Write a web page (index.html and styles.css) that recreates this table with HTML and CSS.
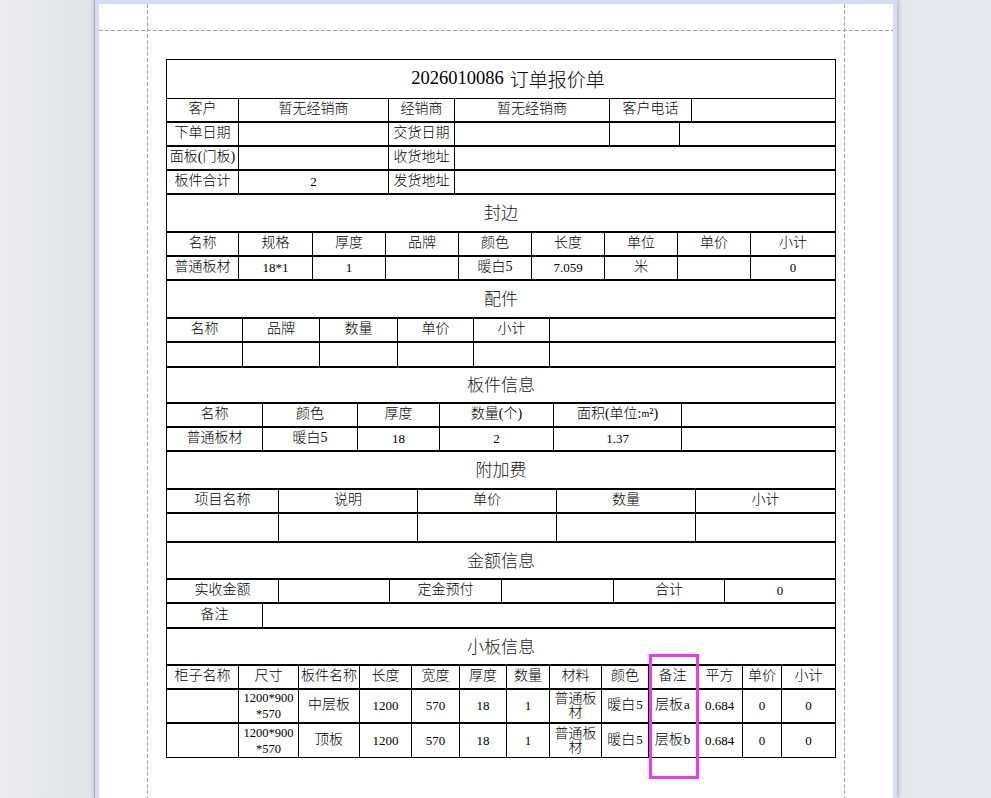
FILE: index.html
```html
<!DOCTYPE html>
<html lang="zh-CN">
<head>
<meta charset="utf-8">
<title>订单报价单</title>
<link rel="stylesheet" href="styles.css">
</head>
<body>
<div class="viewer">
  <div class="frame">
    <div class="page">
      <div class="guide-h"></div>
      <div class="guide-v gl"></div>
      <div class="guide-v gr"></div>

      <div class="tbl">
        <div class="row title h39"><span class="tn">2026010086</span><span class="tc">订单报价单</span></div>

        <div class="row g-info1 h24">
          <div class="c">客户</div><div class="c">暂无经销商</div><div class="c">经销商</div><div class="c">暂无经销商</div><div class="c">客户电话</div><div class="c"></div>
        </div>
        <div class="row g-info2 h24">
          <div class="c">下单日期</div><div class="c"></div><div class="c">交货日期</div><div class="c"></div><div class="c"></div><div class="c"></div>
        </div>
        <div class="row g-info3 h24">
          <div class="c">面板(门板)</div><div class="c"></div><div class="c">收货地址</div><div class="c"></div>
        </div>
        <div class="row g-info3 h24">
          <div class="c">板件合计</div><div class="c num">2</div><div class="c">发货地址</div><div class="c"></div>
        </div>

        <div class="row sec h38">封边</div>
        <div class="row g-edge h24">
          <div class="c">名称</div><div class="c">规格</div><div class="c">厚度</div><div class="c">品牌</div><div class="c">颜色</div><div class="c">长度</div><div class="c">单位</div><div class="c">单价</div><div class="c">小计</div>
        </div>
        <div class="row g-edge h24">
          <div class="c">普通板材</div><div class="c num">18*1</div><div class="c num">1</div><div class="c"></div><div class="c">暖白5</div><div class="c num">7.059</div><div class="c">米</div><div class="c"></div><div class="c num">0</div>
        </div>

        <div class="row sec h38">配件</div>
        <div class="row g-acc h24">
          <div class="c">名称</div><div class="c">品牌</div><div class="c">数量</div><div class="c">单价</div><div class="c">小计</div><div class="c"></div>
        </div>
        <div class="row g-acc h25">
          <div class="c"></div><div class="c"></div><div class="c"></div><div class="c"></div><div class="c"></div><div class="c"></div>
        </div>

        <div class="row sec h36">板件信息</div>
        <div class="row g-panel h24">
          <div class="c">名称</div><div class="c">颜色</div><div class="c">厚度</div><div class="c">数量(个)</div><div class="c">面积(单位:<span class="sm">m</span>²)</div><div class="c"></div>
        </div>
        <div class="row g-panel h24">
          <div class="c">普通板材</div><div class="c">暖白5</div><div class="c num">18</div><div class="c num">2</div><div class="c num">1.37</div><div class="c"></div>
        </div>

        <div class="row sec h38">附加费</div>
        <div class="row g-extra h24">
          <div class="c">项目名称</div><div class="c">说明</div><div class="c">单价</div><div class="c">数量</div><div class="c">小计</div>
        </div>
        <div class="row g-extra h29">
          <div class="c"></div><div class="c"></div><div class="c"></div><div class="c"></div><div class="c"></div>
        </div>

        <div class="row sec h37">金额信息</div>
        <div class="row g-money h24">
          <div class="c">实收金额</div><div class="c"></div><div class="c">定金预付</div><div class="c"></div><div class="c">合计</div><div class="c num">0</div>
        </div>
        <div class="row g-note h25">
          <div class="c">备注</div><div class="c"></div>
        </div>

        <div class="row sec h37">小板信息</div>
        <div class="row g-small h24">
          <div class="c">柜子名称</div><div class="c">尺寸</div><div class="c">板件名称</div><div class="c">长度</div><div class="c">宽度</div><div class="c">厚度</div><div class="c">数量</div><div class="c">材料</div><div class="c">颜色</div><div class="c">备注</div><div class="c">平方</div><div class="c">单价</div><div class="c">小计</div>
        </div>
        <div class="row g-small h34">
          <div class="c"></div><div class="c num wrap">1200*900<br>*570</div><div class="c">中层板</div><div class="c num">1200</div><div class="c num">570</div><div class="c num">18</div><div class="c num">1</div><div class="c wrap">普通板<br>材</div><div class="c">暖白<span class="n5">5</span></div><div class="c">层板<span class="n5">a</span></div><div class="c num">0.684</div><div class="c num">0</div><div class="c num">0</div>
        </div>
        <div class="row g-small h33 last">
          <div class="c"></div><div class="c num wrap">1200*900<br>*570</div><div class="c">顶板</div><div class="c num">1200</div><div class="c num">570</div><div class="c num">18</div><div class="c num">1</div><div class="c wrap">普通板<br>材</div><div class="c">暖白<span class="n5">5</span></div><div class="c">层板<span class="n5">b</span></div><div class="c num">0.684</div><div class="c num">0</div><div class="c num">0</div>
        </div>

        <div class="mark"></div>
      </div>
    </div>
  </div>
</div>
</body>
</html>
```

FILE: styles.css
```css
html, body {
  margin: 0;
  padding: 0;
}
body {
  background: #e8e9ee;
  height: 798px;
  overflow: hidden;
  font-family: "Liberation Serif", "Noto Sans CJK SC", serif;
  color: #000;
}
.viewer {
  padding-left: 94px;
  height: 798px;
  background: linear-gradient(to right, #ececf0 0, #e3e4e9 90px, #e8e9ee 100%);
}
.frame {
  width: 803px;
  height: 798px;
  box-sizing: border-box;
  background: #d5dcf3;
  border-left: 1px solid #a9aab1;
  padding: 4px 4px 0 4px;
  box-shadow: 1px 0 5px rgba(0, 0, 0, 0.28);
}
.page {
  position: relative;
  background: #fff;
  height: 800px;
  box-sizing: border-box;
  padding: 55px 0 0 67px;
}
.guide-h {
  position: absolute;
  left: 0;
  right: 0;
  top: 26px;
  height: 1px;
  background: repeating-linear-gradient(to right, #a3a3a3 0 4px, transparent 4px 6px);
}
.guide-v {
  position: absolute;
  top: 0;
  bottom: 0;
  width: 1px;
  background: repeating-linear-gradient(to bottom, #a3a3a3 0 4px, transparent 4px 6px);
}
.gl { left: 48px; }
.gr { left: 745px; }

.tbl {
  position: relative;
  width: 670px;
  box-sizing: border-box;
  border: 1px solid #000;
}
.row {
  box-sizing: border-box;
  border-bottom: 2px solid #000;
  display: grid;
}
.row.last { border-bottom: 0; }
.title {
  border-bottom-width: 1px;
  display: flex;
  align-items: center;
  justify-content: center;
  padding-left: 14px;
  padding-bottom: 1px;
}
.tn {
  font-family: "Liberation Serif", serif;
  font-size: 18.5px;
}
.tc {
  font-family: "Noto Sans CJK SC", sans-serif;
  font-size: 19px;
  font-weight: 300;
  margin-left: 6px;
}
.sec {
  display: flex;
  align-items: center;
  justify-content: center;
  font-family: "Noto Sans CJK SC", sans-serif;
  font-size: 17px;
  font-weight: 300;
  color: #1a1a1a;
  padding-bottom: 3px;
}
.h24 { height: 24px; }
.h25 { height: 25px; }
.h29 { height: 29px; }
.h33 { height: 33px; }
.h34 { height: 34px; }
.h36 { height: 36px; }
.h37 { height: 37px; }
.h38 { height: 38px; }
.h39 { height: 39px; }

.g-info1 { grid-template-columns: 71px 150px 66px 155px 82px 144px; }
.g-info2 { grid-template-columns: 71px 150px 66px 155px 70px 156px; }
.g-info3 { grid-template-columns: 71px 150px 66px 381px; }
.g-edge { grid-template-columns: 71px 74px 73px 73px 73px 73px 73px 73px 85px; }
.g-acc { grid-template-columns: 75px 77px 78px 76px 76px 286px; }
.g-panel { grid-template-columns: 95px 95px 82px 114px 128px 154px; }
.g-extra { grid-template-columns: 111px 139px 139px 139px 140px; }
.g-money { grid-template-columns: 111px 111px 112px 112px 111px 111px; }
.g-note { grid-template-columns: 95px 573px; }
.g-small { grid-template-columns: 71px 60px 61px 52px 48px 47px 43px 52px 47px 48px 46px 39px 54px; }

.c {
  box-sizing: border-box;
  display: flex;
  align-items: center;
  justify-content: center;
  text-align: center;
  font-size: 14px;
  font-weight: 300;
  line-height: 16px;
  padding-bottom: 2px;
  white-space: nowrap;
  overflow: hidden;
}
.c + .c { border-left: 1px solid #000; }
.num {
  font-size: 13px;
  font-weight: 400;
  padding-bottom: 0;
}
.wrap {
  line-height: 14px;
  padding-bottom: 0;
}
.num.wrap { line-height: 16px; font-size: 12.5px; }
.n5 {
  font-size: 13px;
  font-weight: 400;
  margin-left: 1px;
}
.sm { font-size: 10px; }

.mark {
  position: absolute;
  left: 482px;
  top: 594px;
  width: 50px;
  height: 125px;
  box-sizing: border-box;
  border: 3px solid #f236f2;
}
```
